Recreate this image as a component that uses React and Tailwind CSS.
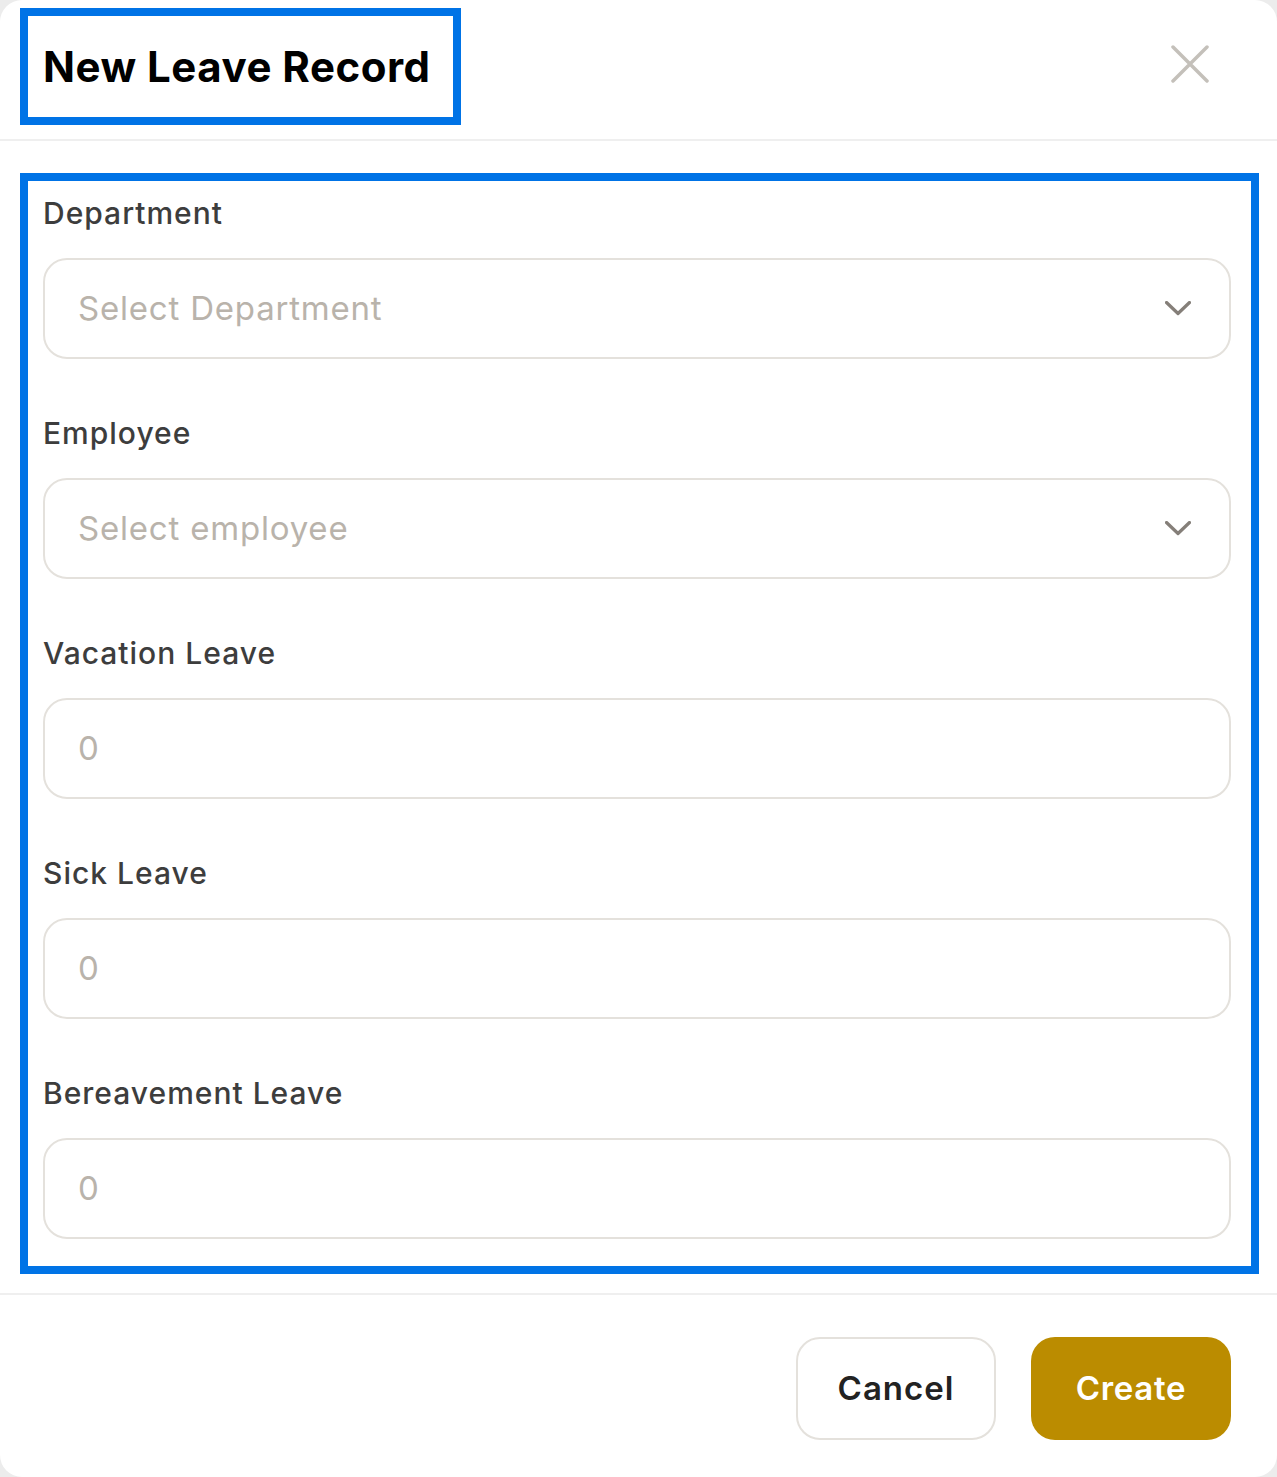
import React from 'react';

const Chevron = () => (
    <svg width="26" height="15" viewBox="0 0 26 15" fill="none" className="shrink-0">
        <polyline points="1.5,1.5 13,12.5 24.5,1.5" stroke="#857f79" strokeWidth="3.2" strokeLinecap="round" strokeLinejoin="round" />
    </svg>
);

const CloseIcon = () => (
    <svg width="38" height="38" viewBox="0 0 38 38" fill="none">
        <path d="M2 2 L36 36 M36 2 L2 36" stroke="#c4c0ba" strokeWidth="3.5" strokeLinecap="round" />
    </svg>
);

const fields = [
    { label: 'Department', placeholder: 'Select Department', select: true },
    { label: 'Employee', placeholder: 'Select employee', select: true },
    { label: 'Vacation Leave', placeholder: '0' },
    { label: 'Sick Leave', placeholder: '0' },
    { label: 'Bereavement Leave', placeholder: '0' },
];

const Field = ({ label, placeholder, select, first }) => (
    <div className={first ? '' : 'mt-[56px]'}>
        <div className="text-[30px] leading-[36px] font-medium tracking-[1px] text-[#3d3d3d]">{label}</div>
        <div className="mt-[27px] h-[101px] rounded-[24px] border-2 border-[#e4e1dc] bg-white flex items-center justify-between pl-[33px] pr-[38px]">
            <span className="text-[33px] tracking-[0.8px] text-[#b9b3ab]">{placeholder}</span>
            {select && <Chevron />}
        </div>
    </div>
);

export default function App() {
    return (
        <div className="w-[1277px] h-[1477px] bg-[#ececec]" style={{ fontFamily: 'Inter, "Noto Sans", sans-serif' }}>
            <div className="w-full h-full bg-white rounded-[22px] flex flex-col">
                {/* header */}
                <div className="pt-[8px] pl-[20px] pr-[68px] flex items-start justify-between">
                    <div className="w-[441px] h-[117px] border-[8px] border-[#0073e6] pl-[15px] flex items-center">
                        <h2 className="text-[42px] font-bold text-black tracking-[0.5px]">New Leave Record</h2>
                    </div>
                    <div className="pt-[37px]">
                        <CloseIcon />
                    </div>
                </div>
                <div className="mt-[14px] h-[2px] bg-[#efefef]" />

                {/* body */}
                <div className="mt-[32px] mx-[20px] w-[1239px] border-[8px] border-[#0073e6] pt-[14px] pb-[27px] pl-[15px] pr-[20px]">
                    {fields.map((f, i) => (
                        <Field key={f.label} {...f} first={i === 0} />
                    ))}
                </div>

                <div className="mt-[19px] h-[2px] bg-[#efefef]" />

                {/* footer */}
                <div className="mt-[42px] flex justify-end gap-[35px] pr-[46px]">
                    <button className="w-[200px] h-[103px] rounded-[24px] border-2 border-[#e4e1dc] bg-white text-[33px] font-semibold tracking-[1px] text-[#222]">
                        Cancel
                    </button>
                    <button className="w-[200px] h-[103px] rounded-[24px] bg-[#bb8c00] text-[33px] font-semibold tracking-[0.7px] text-white">
                        Create
                    </button>
                </div>
            </div>
        </div>
    );
}
